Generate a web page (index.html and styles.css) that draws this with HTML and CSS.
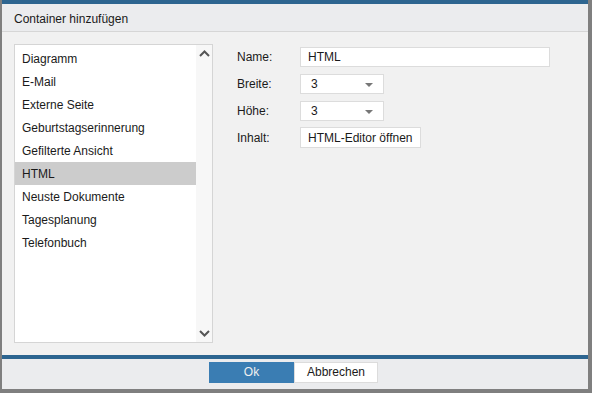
FILE: index.html
```html
<!DOCTYPE html>
<html lang="de">
<head>
    <meta charset="UTF-8">
    <title>Container hinzufügen</title>
    <link rel="stylesheet" href="styles.css">
</head>
<body>
    <div class="dialog">
        <div class="dialog-head">Container hinzufügen</div>

        <div class="dialog-body">
            <div class="list">
                <ul class="list-items">
                    <li>Diagramm</li>
                    <li>E-Mail</li>
                    <li>Externe Seite</li>
                    <li>Geburtstagserinnerung</li>
                    <li>Gefilterte Ansicht</li>
                    <li class="selected">HTML</li>
                    <li>Neuste Dokumente</li>
                    <li>Tagesplanung</li>
                    <li>Telefonbuch</li>
                </ul>
                <div class="scrollbar">
                    <svg width="11" height="7" viewBox="0 0 11 7"><path d="M1 6 L5.5 1.5 L10 6" fill="none" stroke="#555" stroke-width="2"/></svg>
                    <svg width="11" height="7" viewBox="0 0 11 7"><path d="M1 1 L5.5 5.5 L10 1" fill="none" stroke="#555" stroke-width="2"/></svg>
                </div>
            </div>

            <div class="form">
                <div class="form-row">
                    <label>Name:</label>
                    <div class="field name-field">HTML</div>
                </div>
                <div class="form-row">
                    <label>Breite:</label>
                    <div class="field select">3<span class="caret"></span></div>
                </div>
                <div class="form-row">
                    <label>Höhe:</label>
                    <div class="field select">3<span class="caret"></span></div>
                </div>
                <div class="form-row">
                    <label>Inhalt:</label>
                    <button class="btn-editor">HTML-Editor öffnen</button>
                </div>
            </div>
        </div>

        <div class="dialog-foot">
            <button class="btn btn-primary">Ok</button>
            <button class="btn">Abbrechen</button>
        </div>
    </div>
</body>
</html>
```

FILE: styles.css
```css
body {
    margin: 0;
    background-color: #7f7f7f;
    font-family: "Liberation Sans", Arial, sans-serif;
    font-size: 12px;
    color: #1a1a1a;
}
.dialog {
    margin-left: 2px;
    width: 586px;
    height: 389px;
    background-color: #f1f1f1;
    border-top: 4px solid #2d6590;
    box-sizing: border-box;
    display: flex;
    flex-direction: column;
}
.dialog-head {
    height: 28px;
    padding-left: 12px;
    padding-top: 3px;
    box-sizing: border-box;
    background-color: #ebecee;
    border-bottom: 1px solid #d6d6d6;
    display: flex;
    align-items: center;
}
.dialog-body {
    flex: 1;
    display: flex;
    padding: 12px 12px 12px 12px;
}

/* list on the left */
.list {
    width: 199px;
    height: 299px;
    box-sizing: border-box;
    border: 1px solid #d5d5d5;
    background-color: #fff;
    display: flex;
}
.list-items {
    list-style: none;
    margin: 0;
    padding: 2px 0 0 0;
    flex: 1;
}
.list-items li {
    height: 23px;
    line-height: 24px;
    padding-left: 7px;
}
.list-items li.selected {
    background-color: #cccccc;
}
.scrollbar {
    width: 16px;
    background-color: #f7f7f7;
    display: flex;
    flex-direction: column;
    justify-content: space-between;
    align-items: center;
    padding: 5px 0 5px 0;
}

/* form on the right */
.form {
    margin-left: 24px;
    margin-top: 3px;
    display: flex;
    flex-direction: column;
    gap: 7px;
}
.form-row {
    display: flex;
    align-items: center;
    height: 20px;
}
.form-row label {
    width: 63px;
}
.field {
    height: 20px;
    box-sizing: border-box;
    border: 1px solid #dcdcdc;
    background-color: #fff;
    padding-left: 7px;
    line-height: 18px;
}
.name-field {
    width: 250px;
}
.select {
    width: 84px;
    padding-left: 10px;
    position: relative;
}
.caret {
    position: absolute;
    right: 10px;
    top: 8px;
    border-left: 4px solid transparent;
    border-right: 4px solid transparent;
    border-top: 4px solid #777;
}
.btn-editor {
    height: 21px;
    box-sizing: border-box;
    border: 1px solid #dcdcdc;
    background-color: #fff;
    font-family: inherit;
    font-size: 12px;
    color: #1a1a1a;
    padding: 0 7px;
}

/* footer buttons */
.dialog-foot {
    height: 28px;
    background-color: #ebecee;
    border-top: 4px solid #2d6590;
    display: flex;
    justify-content: center;
    align-items: flex-start;
    padding-top: 3px;
    padding-right: 3px;
}
.btn {
    height: 21px;
    width: 84px;
    border: 1px solid #dcdcdc;
    background-color: #fff;
    font-family: inherit;
    font-size: 12px;
    color: #1a1a1a;
    padding: 0;
}
.btn-primary {
    width: 85px;
    background-color: #3a7db3;
    border-color: #3a7db3;
    color: #f0f0f0;
}
```
